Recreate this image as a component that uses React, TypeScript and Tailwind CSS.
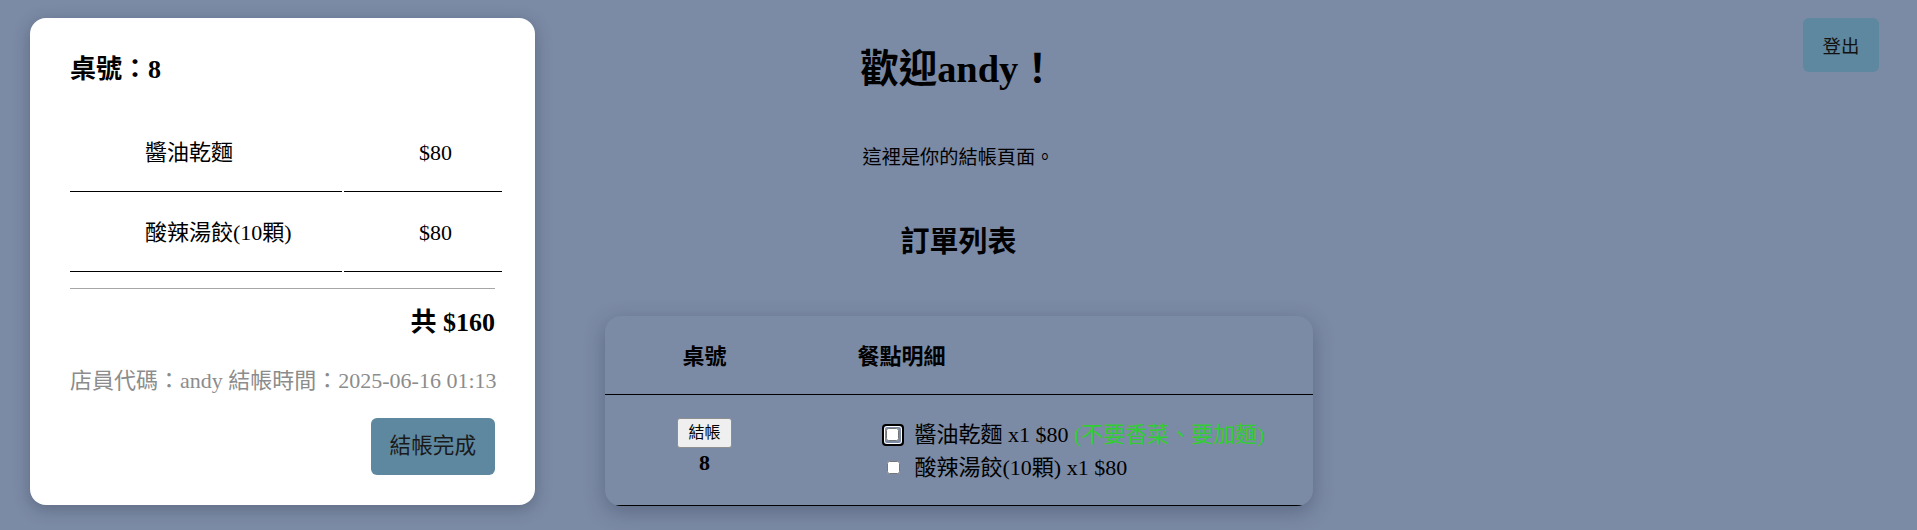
import React from "react";

const serif = "font-['Liberation_Serif','Noto_Sans_CJK_TC',serif]";
const sans = "font-['Liberation_Sans','Noto_Sans_CJK_TC',sans-serif]";

const receiptItems = [
  { name: "醬油乾麵", price: 80 },
  { name: "酸辣湯餃(10顆)", price: 80 },
];

const ReceiptCard = () => {
  return (
    <div className="w-[505px] bg-white rounded-2xl shadow-[0_4px_16px_rgba(40,50,70,0.35)] px-10 pt-[36px] pb-[30px] text-black">
      <h2 className="text-[26px] leading-[32px] font-bold">桌號：8</h2>

      <table className="mt-[26px] w-[436px] border-separate border-spacing-[2px] -ml-[2px] text-[22px]">
        <tbody>
          {receiptItems.map((item) => (
            <tr key={item.name}>
              <td className="w-[272px] h-[78px] border-b border-black pl-[75px] text-left">{item.name}</td>
              <td className="w-[158px] h-[78px] border-b border-black pl-[75px] text-left">${item.price}</td>
            </tr>
          ))}
        </tbody>
      </table>

      <hr className="mt-[14px] border-t border-[#a6a6a6]" />

      <div className="mt-[18px] text-right text-[26px] leading-[32px] font-bold">共 $160</div>

      <div className="mt-[27px] text-right text-[22px] leading-[30px] text-[#8c8c8c] whitespace-nowrap">
        店員代碼：andy 結帳時間：2025-06-16 01:13
      </div>

      <div className="mt-[22px] flex justify-end">
        <button className={`${sans} h-[57px] px-[19px] rounded-md bg-[#5e889f] text-[21.6px] text-[#1a1a1a]`}>
          結帳完成
        </button>
      </div>
    </div>
  );
};

const CheckBox = ({ focused }: { focused?: boolean }) => {
  if (focused) {
    return (
      <span className="w-[22px] h-[22px] -ml-[5px] mr-[11px] shrink-0 rounded-[4px] border-2 border-black flex items-center justify-center">
        <span className="w-[18px] h-[18px] rounded-[3px] border border-white flex items-center justify-center">
          <input type="checkbox" className="m-0 w-[13px] h-[13px]" />
        </span>
      </span>
    );
  }
  return <input type="checkbox" className="m-0 mr-[15px] w-[13px] h-[13px] shrink-0" />;
};

const OrderTable = () => {
  return (
    <div className="mt-[56px] w-[708px] rounded-2xl overflow-hidden shadow-[0_6px_20px_rgba(40,50,75,0.35)] text-[22px]">
      <div className="flex border-b border-black font-bold">
        <div className="w-[200px] pt-[26px] pb-[22px] leading-[30px] text-center">桌號</div>
        <div className="pl-[53px] pt-[26px] pb-[22px] leading-[30px]">餐點明細</div>
      </div>
      <div className="flex border-b border-black pt-[23px] pb-[21px]">
        <div className="w-[200px] flex flex-col items-center">
          <button className={`${sans} h-[30px] px-[10px] border border-[#8f8f8f] rounded-[3px] bg-[#efefef] text-[16px] leading-[20px] text-black`}>
            結帳
          </button>
          <span className="font-bold leading-[30px]">8</span>
        </div>
        <div className="pl-[82px] flex flex-col">
          <div className="flex items-center h-[33px]">
            <CheckBox focused />
            <span>
              醬油乾麵 x1 $80 <span className="text-[#32cd32]">(不要香菜、要加麵)</span>
            </span>
          </div>
          <div className="flex items-center h-[33px]">
            <CheckBox />
            <span>酸辣湯餃(10顆) x1 $80</span>
          </div>
        </div>
      </div>
    </div>
  );
};

export default function App() {
  return (
    <div className={`${serif} min-h-[530px] bg-[#7b8aa5] text-black grid grid-cols-[535px_1fr_535px]`}>
      <div className="pl-[30px] pt-[18px]">
        <ReceiptCard />
      </div>

      <div className="flex flex-col items-center">
        <h1 className="mt-[47px] text-[38.4px] leading-[44px] font-bold">歡迎andy！</h1>
        <p className="mt-[53px] text-[19.2px] leading-[28px]">這裡是你的結帳頁面。</p>
        <h2 className="mt-[52px] text-[29px] leading-[36px] font-bold">訂單列表</h2>
        <OrderTable />
      </div>

      <div className="flex justify-end items-start pr-[38px] pt-[18px]">
        <button className={`${sans} w-[76px] h-[54px] pt-[3px] rounded-md bg-[#5e889f] text-[18.4px] text-[#111]`}>登出</button>
      </div>
    </div>
  );
}
